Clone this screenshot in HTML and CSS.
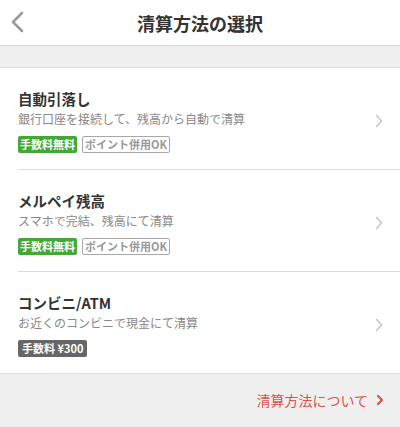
FILE: index.html
```html
<!DOCTYPE html>
<html lang="ja">
<head>
    <meta charset="UTF-8">
    <meta name="viewport" content="width=device-width, initial-scale=1.0">
    <title>清算方法の選択</title>
    <link rel="stylesheet" href="styles.css">
</head>
<body>
    <div class="header">
        <a class="back" href="#">
            <svg width="14" height="22" viewBox="0 0 14 22"><path d="M12 2 L3 11 L12 20" fill="none" stroke="#9a9a9a" stroke-width="2.6" stroke-linecap="round" stroke-linejoin="round"/></svg>
        </a>
        <h1>清算方法の選択</h1>
    </div>

    <div class="spacer"></div>

    <div class="list">
        <a class="item" href="#">
            <div class="info">
                <div class="name">自動引落し</div>
                <div class="desc">銀行口座を接続して、残高から自動で清算</div>
                <div class="tags">
                    <span class="tag green">手数料無料</span>
                    <span class="tag outline">ポイント併用OK</span>
                </div>
            </div>
            <svg class="arrow" width="8" height="14" viewBox="0 0 8 14"><path d="M1.5 1.5 L6.5 7 L1.5 12.5" fill="none" stroke="#c6c6c6" stroke-width="1.6" stroke-linecap="round" stroke-linejoin="round"/></svg>
        </a>
        <a class="item" href="#">
            <div class="info">
                <div class="name">メルペイ残高</div>
                <div class="desc">スマホで完結、残高にて清算</div>
                <div class="tags">
                    <span class="tag green">手数料無料</span>
                    <span class="tag outline">ポイント併用OK</span>
                </div>
            </div>
            <svg class="arrow" width="8" height="14" viewBox="0 0 8 14"><path d="M1.5 1.5 L6.5 7 L1.5 12.5" fill="none" stroke="#c6c6c6" stroke-width="1.6" stroke-linecap="round" stroke-linejoin="round"/></svg>
        </a>
        <a class="item" href="#">
            <div class="info">
                <div class="name">コンビニ/ATM</div>
                <div class="desc">お近くのコンビニで現金にて清算</div>
                <div class="tags">
                    <span class="tag dark">手数料 ¥300</span>
                </div>
            </div>
            <svg class="arrow" width="8" height="14" viewBox="0 0 8 14"><path d="M1.5 1.5 L6.5 7 L1.5 12.5" fill="none" stroke="#c6c6c6" stroke-width="1.6" stroke-linecap="round" stroke-linejoin="round"/></svg>
        </a>
    </div>

    <div class="footer">
        <a class="about" href="#">清算方法について
            <svg width="8" height="12" viewBox="0 0 8 12"><path d="M2 2 L6 6 L2 10" fill="none" stroke="#d9534a" stroke-width="2.2" stroke-linecap="round" stroke-linejoin="round"/></svg>
        </a>
    </div>
</body>
</html>
```

FILE: styles.css
```css
body {
    font-family: "Noto Sans CJK JP", "Noto Sans", sans-serif;
    margin: 0;
    padding: 0;
    background: #efefef;
    color: #333;
    height: 427px;
    overflow: hidden;
}
a {
    text-decoration: none;
    color: inherit;
}
.header {
    position: relative;
    height: 45px;
    background: #fff;
    border-bottom: 1px solid #d8d8d8;
    display: flex;
    align-items: center;
    justify-content: center;
}
.header h1 {
    margin: 0;
    font-size: 18px;
    font-weight: bold;
    color: #333;
}
.back {
    position: absolute;
    left: 10px;
    top: 11px;
}
.spacer {
    height: 21px;
    border-bottom: 1px solid #dcdcdc;
}
.list {
    background: #fff;
    padding-left: 18px;
    border-bottom: 1px solid #e2e2e2;
}
.item {
    display: flex;
    align-items: center;
    padding: 20px 17px 16px 0;
    border-bottom: 1px solid #dedede;
}
.item:last-child {
    border-bottom: none;
    padding-bottom: 16px;
}
.info {
    flex: 1;
}
.name {
    font-size: 14.5px;
    font-weight: bold;
    line-height: 22px;
    color: #333;
}
.desc {
    font-size: 12px;
    line-height: 18px;
    color: #888;
}
.tags {
    display: flex;
    gap: 5px;
    margin-top: 8px;
}
.tag {
    font-size: 11px;
    font-weight: bold;
    line-height: 15px;
    padding: 1px 2px;
    border-radius: 2px;
}
.tag.green {
    background: #45a735;
    color: #fff;
}
.tag.outline {
    border: 1px solid #a8a8a8;
    padding: 0 2px;
    color: #999;
}
.tag.dark {
    background: #666;
    color: #fff;
    padding: 1px 4px;
}
.footer {
    display: flex;
    justify-content: flex-end;
    padding: 16px 16px 0 0;
}
.about {
    display: flex;
    align-items: center;
    gap: 8px;
    font-size: 14px;
    color: #d9534a;
}
```
